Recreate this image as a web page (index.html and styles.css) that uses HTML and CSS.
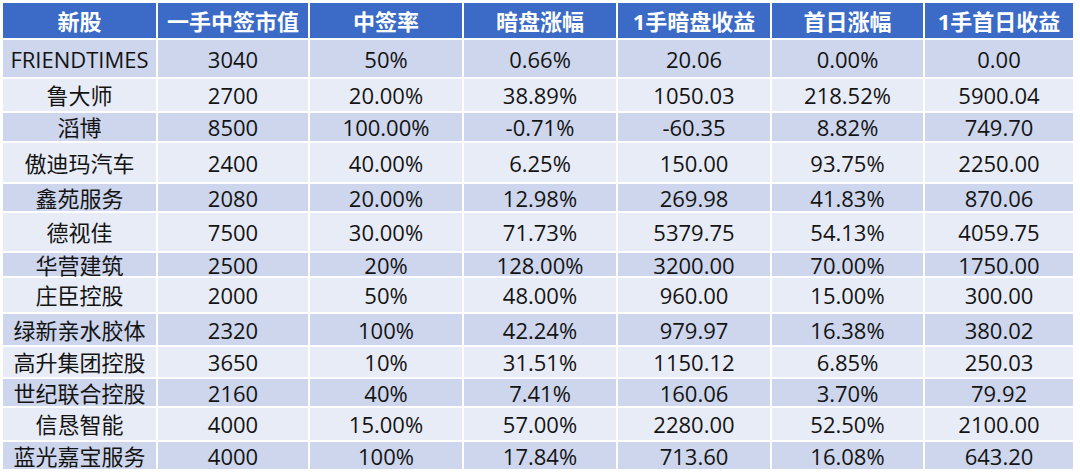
FILE: index.html
```html
<!DOCTYPE html>
<html lang="zh">
<head>
<meta charset="utf-8">
<link rel="stylesheet" href="styles.css">
</head>
<body>
<div class="table">
  <div class="c h">新股</div><div class="c h">一手中签市值</div><div class="c h">中签率</div><div class="c h">暗盘涨幅</div><div class="c h">1手暗盘收益</div><div class="c h">首日涨幅</div><div class="c h">1手首日收益</div>

  <div class="c a">FRIENDTIMES</div><div class="c a">3040</div><div class="c a">50%</div><div class="c a">0.66%</div><div class="c a">20.06</div><div class="c a">0.00%</div><div class="c a">0.00</div>
  <div class="c b">鲁大师</div><div class="c b">2700</div><div class="c b">20.00%</div><div class="c b">38.89%</div><div class="c b">1050.03</div><div class="c b">218.52%</div><div class="c b">5900.04</div>
  <div class="c a">滔博</div><div class="c a">8500</div><div class="c a">100.00%</div><div class="c a">-0.71%</div><div class="c a">-60.35</div><div class="c a">8.82%</div><div class="c a">749.70</div>
  <div class="c b">傲迪玛汽车</div><div class="c b">2400</div><div class="c b">40.00%</div><div class="c b">6.25%</div><div class="c b">150.00</div><div class="c b">93.75%</div><div class="c b">2250.00</div>
  <div class="c a">鑫苑服务</div><div class="c a">2080</div><div class="c a">20.00%</div><div class="c a">12.98%</div><div class="c a">269.98</div><div class="c a">41.83%</div><div class="c a">870.06</div>
  <div class="c b">德视佳</div><div class="c b">7500</div><div class="c b">30.00%</div><div class="c b">71.73%</div><div class="c b">5379.75</div><div class="c b">54.13%</div><div class="c b">4059.75</div>
  <div class="c a">华营建筑</div><div class="c a">2500</div><div class="c a">20%</div><div class="c a">128.00%</div><div class="c a">3200.00</div><div class="c a">70.00%</div><div class="c a">1750.00</div>
  <div class="c b">庄臣控股</div><div class="c b">2000</div><div class="c b">50%</div><div class="c b">48.00%</div><div class="c b">960.00</div><div class="c b">15.00%</div><div class="c b">300.00</div>
  <div class="c a">绿新亲水胶体</div><div class="c a">2320</div><div class="c a">100%</div><div class="c a">42.24%</div><div class="c a">979.97</div><div class="c a">16.38%</div><div class="c a">380.02</div>
  <div class="c b">高升集团控股</div><div class="c b">3650</div><div class="c b">10%</div><div class="c b">31.51%</div><div class="c b">1150.12</div><div class="c b">6.85%</div><div class="c b">250.03</div>
  <div class="c a">世纪联合控股</div><div class="c a">2160</div><div class="c a">40%</div><div class="c a">7.41%</div><div class="c a">160.06</div><div class="c a">3.70%</div><div class="c a">79.92</div>
  <div class="c b">信恳智能</div><div class="c b">4000</div><div class="c b">15.00%</div><div class="c b">57.00%</div><div class="c b">2280.00</div><div class="c b">52.50%</div><div class="c b">2100.00</div>
  <div class="c a">蓝光嘉宝服务</div><div class="c a">4000</div><div class="c a">100%</div><div class="c a">17.84%</div><div class="c a">713.60</div><div class="c a">16.08%</div><div class="c a">643.20</div>
</div>
</body>
</html>
```
FILE: styles.css
```css
html, body {
  margin: 0;
  padding: 0;
  background: #ffffff;
}
body {
  padding: 3px 0 0 3px;
  font-family: "Open Sans", "Noto Sans CJK SC", sans-serif;
  font-size: 22px;
  color: #141414;
}
.table {
  display: grid;
  grid-template-columns: 153px 150px 152px 152px 152px 151px 148px;
  grid-template-rows: 35px 37px 32px 28px 39px 27px 38px 23px 34px 31px 30px 27px 32px 27px;
  gap: 2px;
  width: max-content;
}
.c {
  display: flex;
  align-items: center;
  justify-content: center;
  white-space: nowrap;
  line-height: 1;
}
.h {
  background: #3b6bc7;
  color: #ffffff;
  font-weight: 700;
}
.a {
  background: #cdd6ec;
}
.b {
  background: #e8ecf6;
}
```
